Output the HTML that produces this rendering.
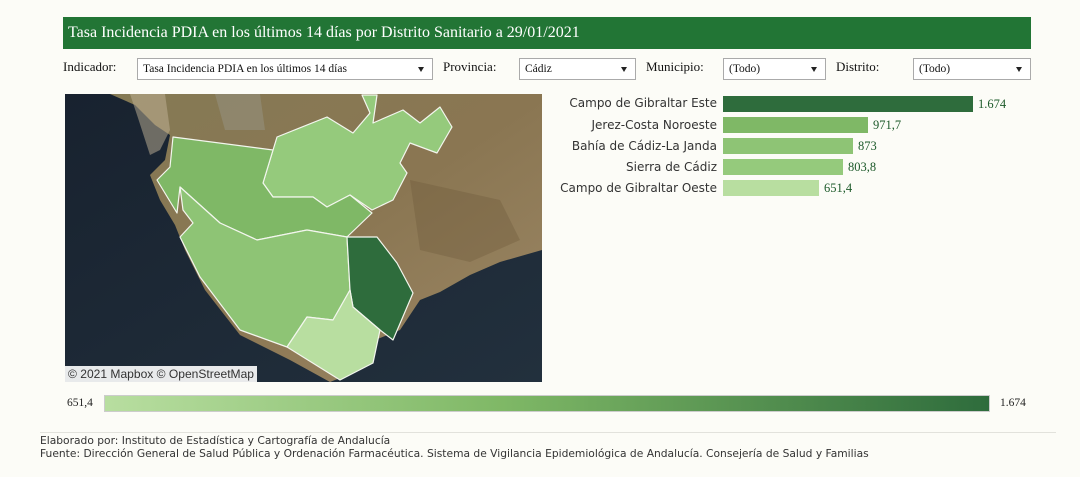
<!DOCTYPE html>
<html><head><meta charset="utf-8"><style>
*{margin:0;padding:0;box-sizing:border-box}
body{width:1080px;height:477px;background:#fcfcf7;position:relative;overflow:hidden;font-family:"Liberation Serif",serif}
.abs{position:absolute}
.hdr{left:63px;top:17px;width:968px;height:32px;background:#227535;color:#fff;font-size:16px;line-height:32px;padding-left:5px}
.lbl{font-size:13px;color:#111;top:59px}
.sel{top:58px;height:22px;border:1px solid #aaa;background:#fff;font-size:11.5px;line-height:20px;padding-left:5px;color:#111}
.sel:after{content:"";position:absolute;right:8px;top:8px;border-left:3.5px solid transparent;border-right:3.5px solid transparent;border-top:5px solid #222}
.bl{font-family:"DejaVu Sans","Liberation Sans",sans-serif;font-size:12px;color:#333;right:363px;text-align:right;white-space:nowrap}
.bar{left:723px}
.val{font-size:12.5px;color:#1d5a2a}
.ft{font-family:"DejaVu Sans",sans-serif;font-size:10.7px;color:#333;left:40px;white-space:nowrap}
</style></head><body>
<div class="abs hdr">Tasa Incidencia PDIA en los últimos 14 días por Distrito Sanitario a 29/01/2021</div>
<div class="abs lbl" style="left:63px">Indicador:</div>
<div class="abs sel" style="left:137px;width:296px">Tasa Incidencia PDIA en los últimos 14 días</div>
<div class="abs lbl" style="left:443px">Provincia:</div>
<div class="abs sel" style="left:519px;width:117px">Cádiz</div>
<div class="abs lbl" style="left:646px">Municipio:</div>
<div class="abs sel" style="left:723px;width:103px">(Todo)</div>
<div class="abs lbl" style="left:836px">Distrito:</div>
<div class="abs sel" style="left:913px;width:118px">(Todo)</div>

<svg class="abs" style="left:65px;top:94px" width="477" height="288" viewBox="65 94 477 288">
<defs>
<linearGradient id="sea" x1="0" y1="0" x2="1" y2="1"><stop offset="0" stop-color="#18222f"/><stop offset="1" stop-color="#22303d"/></linearGradient>
<linearGradient id="land" x1="0" y1="0" x2="1" y2="1"><stop offset="0" stop-color="#857a55"/><stop offset="0.5" stop-color="#8a7652"/><stop offset="1" stop-color="#9c8765"/></linearGradient>
</defs>
<rect x="65" y="94" width="477" height="288" fill="url(#sea)"/>
<path d="M110,94 L542,94 L542,250 L500,262 L470,275 L440,292 L420,300 L400,330 L375,340 L360,370 L330,382 L290,360 L240,335 L205,290 L185,250 L175,225 L160,200 L150,175 L165,160 L170,135 L155,125 L135,105 Z" fill="url(#land)"/>
<path d="M130,94 L165,94 L170,130 L160,150 L150,155 L138,118 Z" fill="#c2b497" opacity="0.5"/>
<path d="M215,94 L260,94 L265,130 L225,130 Z" fill="#9a9a90" opacity="0.4"/>
<path d="M410,180 L500,200 L520,240 L470,262 L420,250 Z" fill="#6e5a3a" opacity="0.35"/>
<g stroke="#f3f6ee" stroke-width="1.2" stroke-linejoin="round">
<path fill="#95ca7c" d="M263,183 L277,137 L327,117 L353,133 L370,113 L362,95 L377,95 L373,123 L403,110 L420,123 L440,107 L452,127 L437,153 L410,143 L400,163 L407,173 L393,200 L372,210 L350,195 L327,207 L313,197 L273,197 Z"/>
<path fill="#7fb866" d="M173,137 L273,150 L263,183 L273,197 L313,197 L327,207 L350,195 L372,213 L347,237 L307,230 L257,240 L220,223 L180,187 L177,213 L157,180 L170,167 Z"/>
<path fill="#8ec475" d="M180,187 L220,223 L257,240 L307,230 L347,237 L350,290 L333,320 L307,317 L287,347 L240,330 L200,277 L180,237 L193,223 L183,210 Z"/>
<path fill="#2e6c3c" d="M347,237 L360,237 L377,237 L397,263 L413,293 L393,340 L380,330 L353,307 L350,290 Z"/>
<path fill="#b8dea0" d="M350,290 L353,307 L380,330 L373,363 L340,380 L287,347 L307,317 L333,320 Z"/>
</g>
<rect x="65" y="366" width="192" height="16" fill="#fff" opacity="0.9"/>
<text x="68" y="378" font-family="Liberation Sans,sans-serif" font-size="12" fill="#333" textLength="186" lengthAdjust="spacingAndGlyphs">© 2021 Mapbox  © OpenStreetMap</text>
</svg>

<div class="abs bl" style="top:96px">Campo de Gibraltar Este</div>
<div class="abs bar" style="top:96px;width:250px;height:16px;background:#2e6c3c"></div>
<div class="abs val" style="left:978px;top:97px">1.674</div>
<div class="abs bl" style="top:118px">Jerez-Costa Noroeste</div>
<div class="abs bar" style="top:117px;width:145px;height:16px;background:#7fb866"></div>
<div class="abs val" style="left:873px;top:118px">971,7</div>
<div class="abs bl" style="top:139px">Bahía de Cádiz-La Janda</div>
<div class="abs bar" style="top:138px;width:130px;height:16px;background:#8ec475"></div>
<div class="abs val" style="left:858px;top:139px">873</div>
<div class="abs bl" style="top:160px">Sierra de Cádiz</div>
<div class="abs bar" style="top:159px;width:120px;height:16px;background:#95ca7c"></div>
<div class="abs val" style="left:848px;top:160px">803,8</div>
<div class="abs bl" style="top:181px">Campo de Gibraltar Oeste</div>
<div class="abs bar" style="top:180px;width:96px;height:16px;background:#b8dea0"></div>
<div class="abs val" style="left:824px;top:181px">651,4</div>

<div class="abs" style="left:67px;top:397px;font-size:11.5px;color:#222">651,4</div>
<div class="abs" style="left:104px;top:395px;width:886px;height:17px;border:1px solid #ccc;background:linear-gradient(to right,#b8dea0,#7fb866 45%,#2e6c3c)"></div>
<div class="abs" style="left:1000px;top:397px;font-size:11.5px;color:#222">1.674</div>

<div class="abs" style="left:40px;top:432px;width:1016px;height:1px;background:#e2e2dc"></div>
<div class="abs ft" style="top:434px">Elaborado por: Instituto de Estadística y Cartografía de Andalucía</div>
<div class="abs ft" style="top:447px">Fuente: Dirección General de Salud Pública y Ordenación Farmacéutica. Sistema de Vigilancia Epidemiológica de Andalucía. Consejería de Salud y Familias</div>
</body></html>
